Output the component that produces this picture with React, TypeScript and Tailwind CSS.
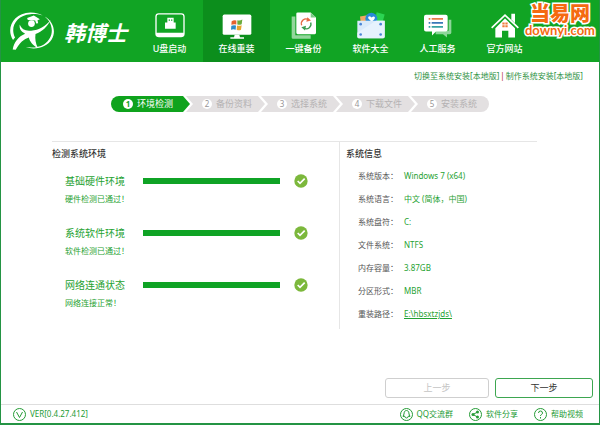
import { ReactNode } from "react";
import clsx from "clsx";

const LogoMark = () => (
    <svg viewBox="28 38 140 118" className="w-[47px] h-10" fill="#fff">
        <path d="M40 124C18 90 40 43 92 42c16 0 28 4 36 9-12-4-24-5-36-4C50 50 30 86 46 116z" />
        <path d="M134 54c34 18 40 66 0 87-18 10-40 10-56 4 20 3 38 1 54-8 32-20 30-62 2-83z" />
        <path d="M60 78c6 14 16 20 34 18 24-2 42-14 58-32-10 21-25 34-45 42-2 14 0 28 7 42-16-10-24-20-27-32-14 4-28 16-39 37l-9-1c4-22 17-39 37-47-12-5-18-14-16-27z" />
        <circle cx="95" cy="75" r="10" />
        <path d="M82 58l20-7 18 11-7 3 2 9-6 1-3-9-22-2z" />
    </svg>
);

const UsbIcon = () => (
    <svg viewBox="0 0 90 80" className="w-[30px] h-[27px]">
        <rect x="3" y="5" width="84" height="68" rx="8" fill="none" stroke="#fff" strokeWidth="4" />
        <path d="M3 62h84v5q0 7-8 7H11q-8 0-8-7z" fill="#fff" />
        <path d="M37 17h19v14h6v19H30V31h7z" fill="#fff" />
        <path d="M41 22h4v4h-4zM48 22h4v4h-4z" fill="#11a424" />
    </svg>
);

const MonitorIcon = () => (
    <svg viewBox="0 0 90 80" className="w-[30px] h-[27px]">
        <rect x="2" y="7" width="86" height="61" rx="5" fill="#fff" />
        <path d="M38 68h14l2 7h12v5H25v-5h11z" fill="#fff" />
        <path d="M29 27q7-5 14-2v12q-7-2-15 1z" fill="#e5602d" />
        <path d="M46 24q8 2 15-2l-2 14q-7 3-13 1z" fill="#6bab3b" />
        <path d="M28 41q7-3 14-1l-1 13q-7-3-14 0z" fill="#2e8bc8" />
        <path d="M45 40q7 2 14-1l-2 14q-6 3-13 0z" fill="#e6a52e" />
    </svg>
);

const BackupIcon = () => (
    <svg viewBox="0 0 90 80" className="w-[30px] h-[27px]">
        <path d="M8 13h11v56h46v11H12q-4 0-4-4z" fill="#93d69c" />
        <path d="M26 1h39l16 15v46q0 4-4 4H26q-4 0-4-4V5q0-4 4-4z" fill="#fff" />
        <path d="M65 1v15h16z" fill="#7ccb88" />
        <path d="M38 39a14 14 0 0 1 20-17" fill="none" stroke="#e56a43" strokeWidth="4" />
        <path d="M55 15l11 10-14 4z" fill="#e56a43" />
        <path d="M65 31a14 14 0 0 1-20 17" fill="none" stroke="#3b9d51" strokeWidth="4" />
        <path d="M48 55L37 45l14-4z" fill="#3b9d51" />
    </svg>
);

const SoftwareIcon = () => (
    <svg viewBox="0 0 90 80" className="w-[30px] h-[27px]">
        <path d="M12 13l22-4 4 20H14z" fill="#f2a765" />
        <path d="M62 0l24 7-6 22H56z" fill="#2bd452" />
        <circle cx="46" cy="20" r="18" fill="#288ad8" />
        <path d="M47 29L37 19q-2-7 5-7l5 4q7-6 10 1 0 5-10 12z" fill="#fff" />
        <path d="M4 26h82v48q0 4-4 4H8q-4 0-4-4z" fill="#d9eafa" />
        <path d="M4 62L60 26h26v48q0 4-4 4H8q-4 0-4-4z" fill="#e6f2fd" />
        <g fill="#4b86d6">
            <circle cx="14" cy="36" r="4" />
            <circle cx="74" cy="36" r="4" />
            <circle cx="14" cy="67" r="4" />
            <circle cx="74" cy="67" r="4" />
        </g>
    </svg>
);

const ServiceIcon = () => (
    <svg viewBox="0 0 90 80" className="w-[30px] h-[27px]">
        <path d="M77 23h8v39q0 4-5 4h-8v10L60 66H38V56h39z" fill="#8dd699" />
        <path d="M9 8h59q6 0 6 6v38q0 6-6 6H39L27 70V58H9q-6 0-6-6V14q0-6 6-6z" fill="#fff" />
        <path d="M17 20h5m4 0h34" stroke="#e57c48" strokeWidth="5" />
        <path d="M17 32h5m4 0h34" stroke="#3878b8" strokeWidth="5" />
        <path d="M17 44h5m4 0h34" stroke="#36a2a3" strokeWidth="5" />
    </svg>
);

const HomeIcon = () => (
    <svg viewBox="0 0 90 80" className="w-[30px] h-[27px]">
        <path d="M5 47L45 9l40 38" fill="none" stroke="#fff" strokeWidth="5" />
        <path d="M64 5h11v28L64 22z" fill="#fff" />
        <path d="M45 19l30 29v28H55V56H36v20H16V48z" fill="#fff" />
        <path d="M37 31h7v6h-7zM46 31h7v6h-7zM37 39h7v6h-7zM46 39h7v6h-7z" fill="#ef7b3b" />
    </svg>
);

const VersionIcon = () => (
    <svg viewBox="0 0 26 26" className="size-[13px]" fill="none" stroke="#249b35" strokeWidth="2">
        <circle cx="13" cy="13" r="12" />
        <path d="M7 8l6 11 6-11" />
    </svg>
);

const QqIcon = () => (
    <svg viewBox="0 0 26 26" className="size-[13px]" fill="none" stroke="#249b35" strokeWidth="2">
        <circle cx="13" cy="13" r="12" />
        <path d="M13 5c-4 0-5 4-5 7l-2 5 3-1q1 4 4 4t4-4l3 1-2-5c0-3-1-7-5-7z" />
    </svg>
);

const ShareIcon = () => (
    <svg viewBox="0 0 26 26" className="size-[13px]" fill="none" stroke="#249b35" strokeWidth="2">
        <circle cx="13" cy="13" r="12" />
        <path d="M17 8l-9 5 9 5" />
        <g fill="#249b35" stroke="none">
            <circle cx="17" cy="8" r="3" />
            <circle cx="8" cy="13" r="3" />
            <circle cx="17" cy="18" r="3" />
        </g>
    </svg>
);

const HelpIcon = () => (
    <svg viewBox="0 0 26 26" className="size-[13px]" fill="none" stroke="#249b35" strokeWidth="2">
        <circle cx="13" cy="13" r="12" />
        <path d="M9 10q0-4 4-4t4 4q0 2-2 3t-2 3M13 18v3" />
    </svg>
);

const tabs = [
    { label: "U盘启动", icon: <UsbIcon /> },
    { label: "在线重装", icon: <MonitorIcon />, active: true },
    { label: "一键备份", icon: <BackupIcon /> },
    { label: "软件大全", icon: <SoftwareIcon /> },
    { label: "人工服务", icon: <ServiceIcon /> },
    { label: "官方网站", icon: <HomeIcon /> },
];

const steps = ["环境检测", "备份资料", "选择系统", "下载文件", "安装系统"];

const checks = [
    { title: "基础硬件环境", result: "硬件检测已通过！", progress: 100 },
    { title: "系统软件环境", result: "软件检测已通过！", progress: 100 },
    { title: "网络连通状态", result: "网络连接正常！", progress: 100 },
];

const systemInfo = [
    { label: "系统版本", value: "Windows 7 (x64)" },
    { label: "系统语言", value: "中文 (简体，中国)" },
    { label: "系统盘符", value: "C:" },
    { label: "文件系统", value: "NTFS" },
    { label: "内存容量", value: "3.87GB" },
    { label: "分区形式", value: "MBR" },
    { label: "重装路径", value: "E:\\hbsxtzjds\\", link: true },
];

const Header = () => (
    <header className="relative flex h-[62px] shrink-0 bg-[#11a424] text-white">
        <div className="flex w-[135px] shrink-0 items-center gap-2 pl-2">
            <LogoMark />
            <span className="whitespace-nowrap pt-1 text-[21px] leading-6 font-bold italic">
                韩博士
            </span>
        </div>
        <nav className="flex">
            {tabs.map((tab) => (
                <button
                    key={tab.label}
                    type="button"
                    className={clsx(
                        "flex w-[67px] flex-col items-center gap-1 pt-3 text-[9px] leading-3 font-medium",
                        tab.active && "bg-[#0c8e1c]"
                    )}
                >
                    {tab.icon}
                    {tab.label}
                </button>
            ))}
        </nav>
        <div className="absolute top-1 right-1 flex flex-col items-center font-bold text-[#f56a10] [paint-order:stroke] [-webkit-text-stroke:3px_white]">
            <span className="text-[20px] leading-5 font-black">当易网</span>
            <span className="font-[Lato,sans-serif] text-[13px] leading-3">
                downyi.com
            </span>
        </div>
    </header>
);

const StepBar = () => (
    <ol className="mt-[14px] flex justify-center text-[9px] leading-4">
        {steps.map((step, idx) => (
            <li
                key={step}
                className={clsx(
                    "flex h-4 items-center gap-1",
                    idx === 0 &&
                        "w-[79px] rounded-l-full bg-[#0fa31d] pl-3 text-white [clip-path:polygon(0_0,calc(100%-7px)_0,100%_50%,calc(100%-7px)_100%,0_100%)]",
                    idx > 0 && "-ml-1 bg-[#e3e0e1] pl-4 text-[#b5b2b3]",
                    idx > 0 &&
                        idx < steps.length - 1 &&
                        "w-[79px] [clip-path:polygon(0_0,calc(100%-7px)_0,100%_50%,calc(100%-7px)_100%,0_100%,7px_50%)]",
                    idx === steps.length - 1 &&
                        "w-[78px] rounded-r-full [clip-path:polygon(0_0,100%_0,100%_100%,0_100%,7px_50%)]"
                )}
            >
                <span
                    className={clsx(
                        "flex size-[10px] items-center justify-center rounded-full bg-white text-[8px]",
                        idx === 0 ? "font-bold text-[#0fa31d]" : "text-[#989596]"
                    )}
                >
                    {idx + 1}
                </span>
                {step}
            </li>
        ))}
    </ol>
);

const CheckList = () => (
    <section className="w-[287px] pt-[6px]">
        <h2 className="text-[9px] leading-3 font-medium text-[#333]">
            检测系统环境
        </h2>
        <ul className="pt-[13px] pl-[13px]">
            {checks.map((check) => (
                <li key={check.title} className="h-[52px] text-[#1fa232]">
                    <div className="flex items-center">
                        <h3 className="w-[78px] text-[10px] leading-4">
                            {check.title}
                        </h3>
                        <div
                            role="progressbar"
                            aria-label={check.title}
                            aria-valuenow={check.progress}
                            className="h-[6px] w-[137px]"
                        >
                            <div
                                className="h-full bg-[#0fa325]"
                                style={{ width: `${check.progress}%` }}
                            />
                        </div>
                        <svg viewBox="0 0 42 42" className="ml-[14px] size-[14px]">
                            <circle cx="21" cy="21" r="20" fill="#7cb83c" />
                            <path d="M11 21l7 7 14-14" fill="none" stroke="#fff" strokeWidth="5" />
                        </svg>
                    </div>
                    <p className="mt-1 text-[8px] leading-3">{check.result}</p>
                </li>
            ))}
        </ul>
    </section>
);

const SystemInfo = () => (
    <section className="flex-1 border-l border-[#e6e6e6] pt-[6px] pl-[6px]">
        <h2 className="text-[9px] leading-3 font-medium text-[#333]">
            系统信息
        </h2>
        <dl className="pt-1 pl-3 text-[8px] leading-[23px]">
            {systemInfo.map((item) => (
                <div key={item.label} className="flex">
                    <dt className="w-[46px] text-[#555]">{item.label}：</dt>
                    <dd className="text-[#1fa232]">
                        {item.link ? (
                            <a href="#path" className="underline">
                                {item.value}
                            </a>
                        ) : (
                            item.value
                        )}
                    </dd>
                </div>
            ))}
        </dl>
    </section>
);

const FooterLink = ({ icon, label }: { icon: ReactNode; label: string }) => (
    <a href="#footer" className="flex items-center gap-1">
        {icon}
        {label}
    </a>
);

const App = () => {
    return (
        <div className="flex min-h-screen flex-col border-x border-b-2 border-[#249444] bg-white font-['Noto_Sans','Noto_Sans_CJK_SC',sans-serif]">
            <Header />
            <div className="flex justify-end gap-px pt-2 pr-4 text-[8px] leading-3 text-[#2c9141]">
                <a href="#local">切换至系统安装[本地版]</a>
                <span className="text-[#b03030]">|</span>
                <a href="#make">制作系统安装[本地版]</a>
            </div>
            <StepBar />
            <main className="mt-[29px] mr-[62px] ml-[51px] flex h-[188px] border-t border-[#e6e6e6]">
                <CheckList />
                <SystemInfo />
            </main>
            <div className="mt-auto flex justify-end gap-[6px] pt-4 pr-[6px] pb-[6px] text-[9px]">
                <button
                    type="button"
                    disabled
                    className="h-5 w-[104px] rounded-[3px] border border-[#cfcfcf] text-[#c4c4c4]"
                >
                    上一步
                </button>
                <button
                    type="button"
                    className="h-5 w-[98px] rounded-[3px] border border-[#3da650] text-[#333]"
                >
                    下一步
                </button>
            </div>
            <footer className="flex h-[19px] items-center justify-between border-t border-[#dedede] pr-4 pl-3 text-[8px] text-[#249b35]">
                <span className="flex items-center gap-1">
                    <VersionIcon />
                    VER[0.4.27.412]
                </span>
                <div className="flex gap-4">
                    <FooterLink icon={<QqIcon />} label="QQ交流群" />
                    <FooterLink icon={<ShareIcon />} label="软件分享" />
                    <FooterLink icon={<HelpIcon />} label="帮助视频" />
                </div>
            </footer>
        </div>
    );
};

export default App;
